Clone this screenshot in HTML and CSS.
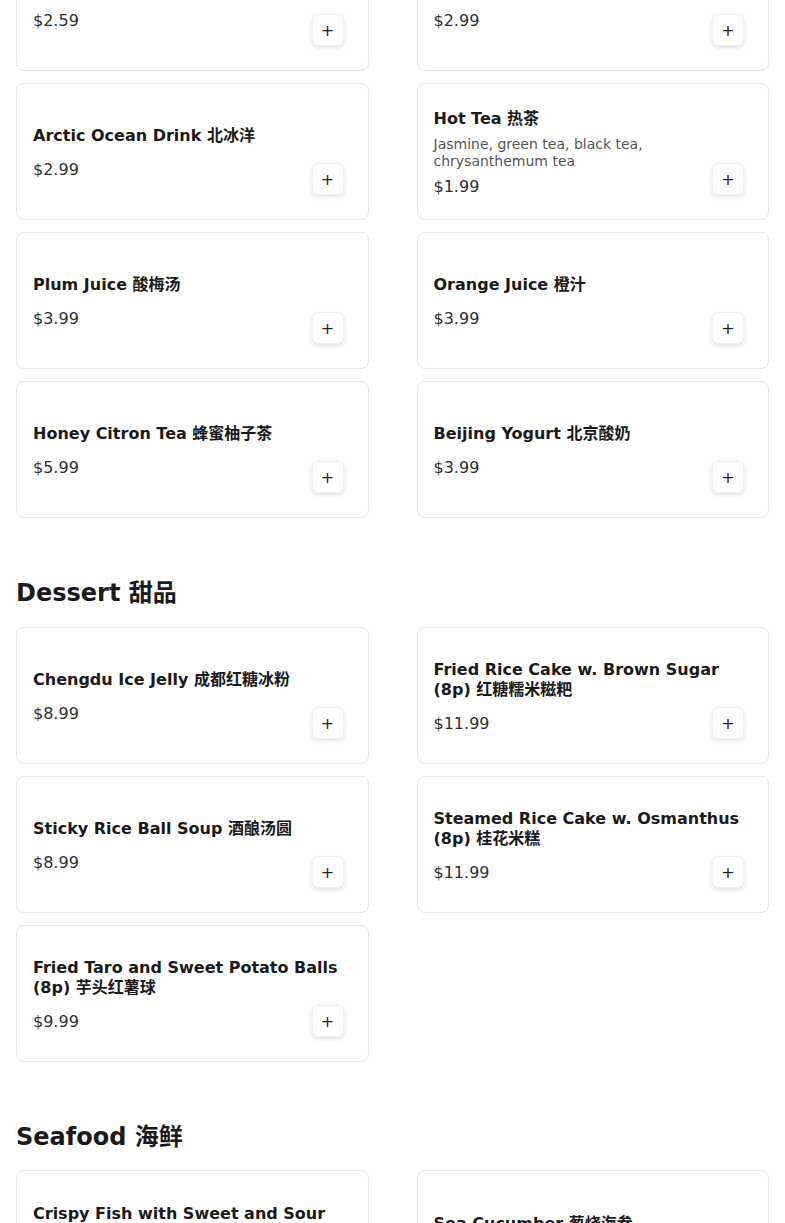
FILE: index.html
```html
<!DOCTYPE html>
<html lang="en">
<head>
<meta charset="utf-8">
<title>Menu</title>
<link rel="stylesheet" href="styles.css">
</head>
<body>
<main class="menu">
  <section class="section section-first">
    <h2 class="section-title">Drinks 饮料</h2>
    <div class="grid">
      <div class="card">
        <div class="info">
          <div class="name">Soda 汽水</div>
          <div class="price">$2.59</div>
        </div>
        <button class="add" type="button">+</button>
      </div>
      <div class="card">
        <div class="info">
          <div class="name">Sparkling Water 气泡水</div>
          <div class="price">$2.99</div>
        </div>
        <button class="add" type="button">+</button>
      </div>
      <div class="card">
        <div class="info">
          <div class="name">Arctic Ocean Drink 北冰洋</div>
          <div class="price">$2.99</div>
        </div>
        <button class="add" type="button">+</button>
      </div>
      <div class="card">
        <div class="info">
          <div class="name">Hot Tea 热茶</div>
          <div class="desc">Jasmine, green tea, black tea, chrysanthemum tea</div>
          <div class="price">$1.99</div>
        </div>
        <button class="add" type="button">+</button>
      </div>
      <div class="card">
        <div class="info">
          <div class="name">Plum Juice 酸梅汤</div>
          <div class="price">$3.99</div>
        </div>
        <button class="add" type="button">+</button>
      </div>
      <div class="card">
        <div class="info">
          <div class="name">Orange Juice 橙汁</div>
          <div class="price">$3.99</div>
        </div>
        <button class="add" type="button">+</button>
      </div>
      <div class="card">
        <div class="info">
          <div class="name">Honey Citron Tea 蜂蜜柚子茶</div>
          <div class="price">$5.99</div>
        </div>
        <button class="add" type="button">+</button>
      </div>
      <div class="card">
        <div class="info">
          <div class="name">Beijing Yogurt 北京酸奶</div>
          <div class="price">$3.99</div>
        </div>
        <button class="add" type="button">+</button>
      </div>
    </div>
  </section>

  <section class="section">
    <h2 class="section-title">Dessert 甜品</h2>
    <div class="grid">
      <div class="card">
        <div class="info">
          <div class="name">Chengdu Ice Jelly 成都红糖冰粉</div>
          <div class="price">$8.99</div>
        </div>
        <button class="add" type="button">+</button>
      </div>
      <div class="card">
        <div class="info">
          <div class="name">Fried Rice Cake w. Brown Sugar (8p) 红糖糯米糍粑</div>
          <div class="price">$11.99</div>
        </div>
        <button class="add" type="button">+</button>
      </div>
      <div class="card">
        <div class="info">
          <div class="name">Sticky Rice Ball Soup 酒酿汤圆</div>
          <div class="price">$8.99</div>
        </div>
        <button class="add" type="button">+</button>
      </div>
      <div class="card">
        <div class="info">
          <div class="name">Steamed Rice Cake w. Osmanthus (8p) 桂花米糕</div>
          <div class="price">$11.99</div>
        </div>
        <button class="add" type="button">+</button>
      </div>
      <div class="card">
        <div class="info">
          <div class="name">Fried Taro and Sweet Potato Balls (8p) 芋头红薯球</div>
          <div class="price">$9.99</div>
        </div>
        <button class="add" type="button">+</button>
      </div>
    </div>
  </section>

  <section class="section">
    <h2 class="section-title">Seafood 海鲜</h2>
    <div class="grid">
      <div class="card">
        <div class="info">
          <div class="name">Crispy Fish with Sweet and Sour Sauce 糖醋鱼</div>
          <div class="price">$18.99</div>
        </div>
        <button class="add" type="button">+</button>
      </div>
      <div class="card">
        <div class="info">
          <div class="name">Sea Cucumber 葱烧海参</div>
          <div class="price">$28.99</div>
        </div>
        <button class="add" type="button">+</button>
      </div>
    </div>
  </section>
</main>
</body>
</html>
```

FILE: styles.css
```css
* {
  box-sizing: border-box;
}

html, body {
  margin: 0;
  padding: 0;
  background: #ffffff;
}

body {
  font-family: "DejaVu Sans", "Noto Sans CJK SC", sans-serif;
  color: #1a1a1a;
}

.menu {
  padding: 0 16px 40px;
}

.section {
  margin-top: 61px;
}

.section-first {
  margin-top: -114px;
}

.section-title {
  margin: 0 0 19px;
  font-size: 24px;
  line-height: 1.2;
  font-weight: 700;
  color: #1a1a1a;
}

.grid {
  display: grid;
  grid-template-columns: 1fr 1fr;
  column-gap: 48px;
  row-gap: 12px;
}

.card {
  display: grid;
  min-height: 137px;
  padding: 19px 16px 13px;
  border: 1px solid #e5e5e5;
  border-radius: 8px;
  background: #ffffff;
}

.info {
  grid-area: 1 / 1;
  align-self: center;
  display: flex;
  flex-direction: column;
}

.name {
  font-size: 16px;
  line-height: 1.2;
  font-weight: 700;
  color: #1a1a1a;
  margin-bottom: 8px;
}

.desc {
  font-size: 14px;
  line-height: 17px;
  color: #555555;
}

.price {
  font-size: 16px;
  line-height: 24px;
  color: #2e2e2e;
  margin-top: 5px;
}

.add {
  grid-area: 1 / 1;
  align-self: end;
  justify-self: end;
  width: 32px;
  height: 32px;
  margin: 0 8px 11px 0;
  padding: 2px 0 0;
  display: flex;
  align-items: center;
  justify-content: center;
  font-family: "DejaVu Sans", sans-serif;
  font-size: 16px;
  line-height: 1;
  color: #222222;
  background: #ffffff;
  border: 1px solid #efefef;
  border-radius: 6px;
  box-shadow: 0 2px 4px rgba(0, 0, 0, 0.12);
  cursor: pointer;
}
```
